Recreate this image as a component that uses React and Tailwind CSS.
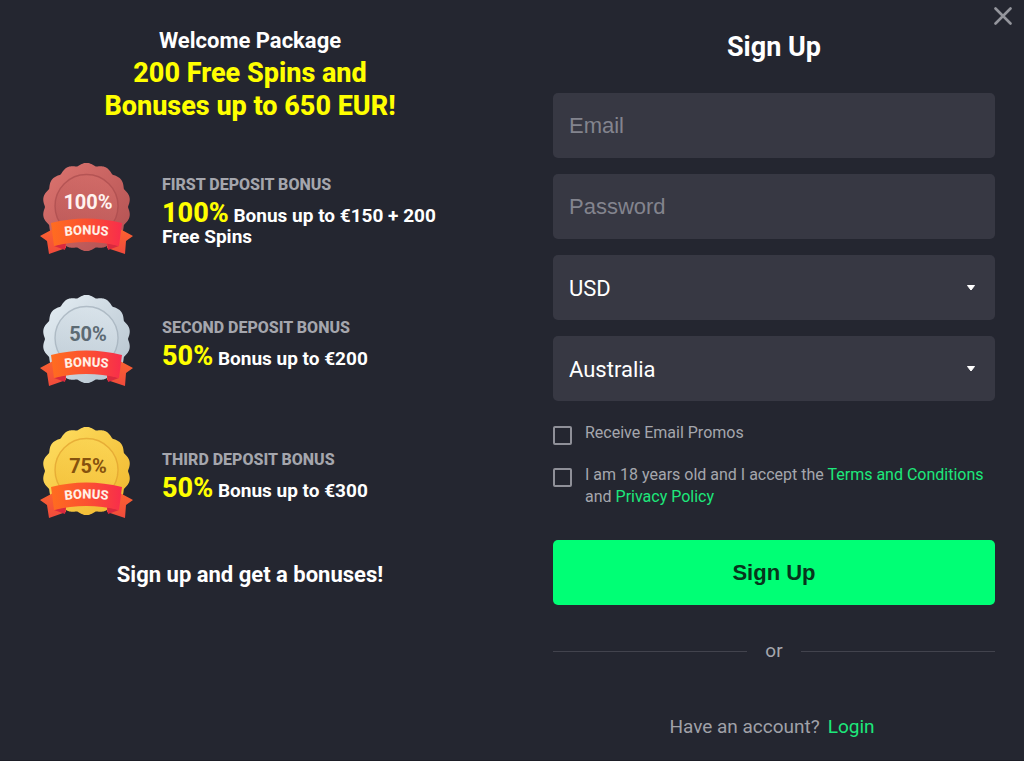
import { useState } from 'react'

const bonuses = [
  {
    id: 'first',
    label: 'First deposit bonus',
    percent: '100%',
    text: 'Bonus up to €150 + 200 Free Spins',
    badge: { value: '100%', from: '#dd7570', to: '#b04f50', ring: '#a94b4d', ink: '#fff3f0' },
  },
  {
    id: 'second',
    label: 'Second deposit bonus',
    percent: '50%',
    text: 'Bonus up to €200',
    badge: { value: '50%', from: '#e6eff5', to: '#b3c1cc', ring: '#9fadb8', ink: '#5c6a73' },
  },
  {
    id: 'third',
    label: 'Third deposit bonus',
    percent: '50%',
    text: 'Bonus up to €300',
    badge: { value: '75%', from: '#ffdf62', to: '#efb52b', ring: '#e09f2d', ink: '#86520e' },
  },
]

// scalloped medal edge around (46.5, 44)
function medalPath(bumps = 14, radius = 41.5, depth = 2.6) {
  const points = []
  for (let i = 0; i < 280; i++) {
    const a = (i / 280) * Math.PI * 2
    const r = radius + depth * Math.pow(Math.abs(Math.cos((a * bumps) / 2)), 1.2)
    points.push(`${(46.5 + r * Math.sin(a)).toFixed(2)} ${(44 - r * Math.cos(a)).toFixed(2)}`)
  }
  return `M${points.join('L')}Z`
}

const medal = medalPath()

function Badge({ id, value, from, to, ring, ink }) {
  return (
    <svg viewBox="0 0 94 94" className="h-[94px] w-[94px] shrink-0" aria-hidden="true">
      <defs>
        <linearGradient id={`${id}-medal`} x1="0" y1="0" x2="1" y2="1">
          <stop offset="0" stopColor={from} />
          <stop offset="1" stopColor={to} />
        </linearGradient>
        <linearGradient id={`${id}-inner`} x1="0" y1="1" x2="1" y2="0">
          <stop offset="0" stopColor={to} />
          <stop offset="1" stopColor={from} />
        </linearGradient>
        <linearGradient id={`${id}-ribbon`} x1="0" y1="0" x2="1" y2="0">
          <stop offset="0" stopColor="#ff6d1f" />
          <stop offset="0.55" stopColor="#fb4e33" />
          <stop offset="1" stopColor="#f82c4c" />
        </linearGradient>
        <linearGradient id={`${id}-tail`} x1="0" y1="0" x2="0" y2="1">
          <stop offset="0" stopColor="#fb6230" />
          <stop offset="1" stopColor="#f04a3c" />
        </linearGradient>
      </defs>
      <path d={medal} fill={`url(#${id}-medal)`} />
      <circle cx="46.5" cy="43" r="31.5" fill={`url(#${id}-inner)`} fillOpacity="0.5" stroke={ring} strokeWidth="1.4" strokeOpacity="0.7" />
      <text x="48" y="46" textAnchor="middle" fontFamily="Roboto, sans-serif" fontSize="20" fontWeight="700" fill={ink}>
        {value}
      </text>
      <path d="M13 66L0 73L7 78L9 91L26 85L26 80Z" fill={`url(#${id}-tail)`} />
      <path d="M80 66L93 73L86 78L85 91L67 85L67 80Z" fill={`url(#${id}-tail)`} />
      <path d="M14 83Q20 81 26 80L25 87Z" fill="#d9293f" />
      <path d="M79 83Q73 81 67 80L68 87Z" fill="#d9293f" />
      <path d="M11 60Q46 51 82 60L79 83Q46 75 14 83Z" fill={`url(#${id}-ribbon)`} />
      <path id={`${id}-arc`} d="M14 75Q46 68 79 75" fill="none" />
      <text fontFamily="Roboto, sans-serif" fontSize="13" fontWeight="800" fill="#fff0e6">
        <textPath href={`#${id}-arc`} startOffset="50%" textAnchor="middle">
          BONUS
        </textPath>
      </text>
    </svg>
  )
}

function BonusItem({ id, label, percent, text, badge }) {
  return (
    <li className="flex h-[94px] items-center gap-7">
      <Badge id={id} {...badge} />
      <div className="w-[290px] pt-0.5">
        <h3 className="text-[16px] leading-5 font-extrabold text-[#a5a6ad] uppercase">{label}</h3>
        <p className="mt-2 text-[19px] leading-[21px] font-bold">
          <strong className="text-[27px] font-extrabold text-[#ffff00]">{percent}</strong> {text}
        </p>
      </div>
    </li>
  )
}

function SelectField({ label, value, options, onChange }) {
  return (
    <label className="relative block">
      <span className="sr-only">{label}</span>
      <select
        value={value}
        onChange={(e) => onChange(e.target.value)}
        className="block h-[65px] w-full appearance-none rounded-[5px] bg-[#373843] px-4 pt-0.5 text-[22px] leading-8 text-white outline-none"
      >
        {options.map((option) => (
          <option key={option}>{option}</option>
        ))}
      </select>
      <svg viewBox="0 0 8 6" className="pointer-events-none absolute top-[30px] right-5 h-1.5 w-2" aria-hidden="true">
        <path d="M0.5 0.5H7.5L4 5Z" fill="#fff" stroke="#fff" strokeLinejoin="round" />
      </svg>
    </label>
  )
}

function CheckField({ id, children }) {
  return (
    <div className="flex items-start gap-[13px]">
      <input
        id={id}
        type="checkbox"
        className="mt-1 h-[19px] w-[19px] shrink-0 appearance-none rounded-[2px] border-2 border-[#8f9098] checked:bg-[#00ff75]"
      />
      <label htmlFor={id} className="text-[16px] leading-[22px] text-[#a5a6ad]">
        {children}
      </label>
    </div>
  )
}

export default function App() {
  const [currency, setCurrency] = useState('USD')
  const [country, setCountry] = useState('Australia')

  return (
    <main className="relative grid min-h-screen grid-cols-2 gap-6 border-b border-[#1d1e27] bg-[#242630] font-['Roboto',sans-serif] text-white">
      <button type="button" aria-label="Close" className="absolute top-[7px] right-3 text-[#94959c]">
        <svg viewBox="0 0 18 18" className="h-[18px] w-[18px]" fill="none" stroke="currentColor" strokeWidth="2.6" strokeLinecap="round">
          <path d="M1.5 1.5L16.5 16.5M16.5 1.5L1.5 16.5" />
        </svg>
      </button>

      {/* Bonus offers */}
      <section className="px-10 pt-6">
        <h2 className="text-center text-[27px] leading-[33px] font-extrabold text-[#ffff00]">
          <span className="block text-[22px] font-bold text-white">Welcome Package</span>
          200 Free Spins and
          <br />
          Bonuses up to 650 EUR!
        </h2>
        <ul className="mt-10 flex flex-col gap-[38px]">
          {bonuses.map((bonus) => (
            <BonusItem key={bonus.id} {...bonus} />
          ))}
        </ul>
        <p className="mt-[38px] text-center text-[22px] leading-8 font-bold">Sign up and get a bonuses!</p>
      </section>

      {/* Registration form */}
      <section className="px-[29px] pt-[29px]">
        <h1 className="text-center text-[27px] leading-9 font-bold">Sign Up</h1>
        <form className="mt-7" onSubmit={(e) => e.preventDefault()}>
          <div className="flex flex-col gap-4">
            <input
              type="email"
              aria-label="Email"
              placeholder="Email"
              className="block h-[65px] w-full rounded-[5px] bg-[#373843] px-4 font-['Liberation_Sans',sans-serif] text-[22px] outline-none placeholder:text-[#83848e]"
            />
            <input
              type="password"
              aria-label="Password"
              placeholder="Password"
              className="block h-[65px] w-full rounded-[5px] bg-[#373843] px-4 font-['Liberation_Sans',sans-serif] text-[22px] outline-none placeholder:text-[#83848e]"
            />
            <SelectField label="Currency" value={currency} options={['USD', 'EUR', 'AUD']} onChange={setCurrency} />
            <SelectField label="Country" value={country} options={['Australia', 'Canada', 'Germany']} onChange={setCountry} />
          </div>

          <div className="mt-[21px] flex flex-col gap-[19px]">
            <CheckField id="promos">Receive Email Promos</CheckField>
            <CheckField id="terms">
              I am 18 years old and I accept the{' '}
              <a href="#terms" className="text-[#1de87b]">Terms and Conditions</a> and{' '}
              <a href="#privacy" className="text-[#1de87b]">Privacy Policy</a>
            </CheckField>
          </div>

          <button
            type="submit"
            className="mt-8 h-[65px] w-full rounded-[5px] bg-[#00ff75] font-['Liberation_Sans',sans-serif] text-[22px] font-bold text-[#07351c]"
          >
            Sign Up
          </button>
        </form>

        <div className="mt-8 flex items-center gap-[18px] text-[19px] leading-7 text-[#a5a6ad]">
          <span className="h-px flex-1 bg-[#42434d]" />
          or
          <span className="h-px flex-1 bg-[#42434d]" />
        </div>
        <p className="mt-12 flex justify-center gap-2 pr-1 text-[19px] leading-7 text-[#a0a1a8]">
          Have an account?
          <a href="#login" className="text-[#1de87b]">Login</a>
        </p>
      </section>
    </main>
  )
}
